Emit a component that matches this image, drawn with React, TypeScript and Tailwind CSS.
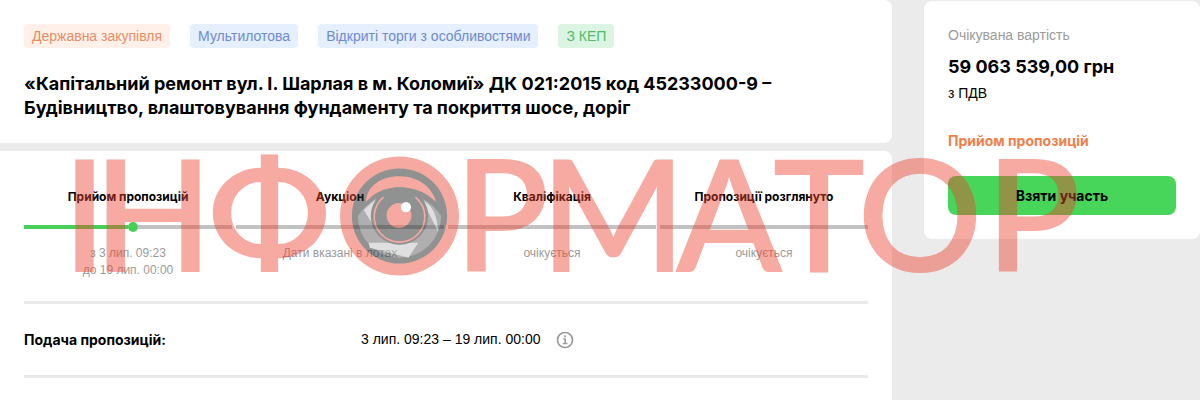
import type { ReactNode } from "react";

type Step = {
  title: string;
  notes: string[];
  active?: boolean;
};

const tags = [
  { label: "Державна закупівля", className: "bg-[#fff0e9] text-[#e58e66]" },
  { label: "Мультилотова", className: "bg-[#e5effd] text-[#6f8ad0]" },
  { label: "Відкриті торги з особливостями", className: "bg-[#e5effd] text-[#6f8ad0]" },
  { label: "З КЕП", className: "bg-[#dbf4e3] text-[#4fbd68]" },
];

const steps: Step[] = [
  { title: "Прийом пропозицій", notes: ["з 3 лип. 09:23", "до 19 лип. 00:00"], active: true },
  { title: "Аукціон", notes: ["Дати вказані в лотах"] },
  { title: "Кваліфікація", notes: ["очікується"] },
  { title: "Пропозиції розглянуто", notes: ["очікується"] },
];

function InfoIcon() {
  return (
    <svg viewBox="0 0 18 18" className="size-[18px]" fill="none" stroke="#9b9b9b" aria-hidden="true">
      <circle cx="9" cy="9" r="7.5" strokeWidth="1.7" />
      <path d="M7.2 8h2v4.3M6.8 12.5h4.6" strokeWidth="1.5" />
      <circle cx="9" cy="5.3" r="1.1" fill="#9b9b9b" stroke="none" />
    </svg>
  );
}

function StepColumn({ step }: { step: Step }) {
  return (
    <li className="flex flex-1 flex-col items-center">
      <h3 className="font-['Inter',sans-serif] text-[12px] leading-4 font-bold whitespace-nowrap">{step.title}</h3>
      <div className="mt-3 mb-2 flex h-5 w-full items-center">
        {step.active ? (
          <>
            <div className="h-1 w-1/2 bg-[#47cf57]" />
            <div className="size-[10px] rounded-full bg-[#47cf57]" />
          </>
        ) : null}
        <div className="h-1 flex-1 bg-[#c2c2c2]" />
      </div>
      {step.notes.map((note) => (
        <p key={note} className="text-[12px] leading-[17px] text-[#9b9b9b]">
          {note}
        </p>
      ))}
    </li>
  );
}

function Eye() {
  return (
    <svg viewBox="0 0 120 120" className="mt-2 size-[120px] opacity-50" aria-hidden="true">
      <circle cx="60" cy="60" r="60" fill="#ef5543" />
      <circle cx="60" cy="60" r="48" fill="#232826" />
      {/* brow */}
      <path d="M26 46C27 30 41 20 60 20S93 31 97 46C87 36 74 31 60 31S35 36 26 46Z" fill="#ef5543" />
      {/* eyeball */}
      <path d="M18 60C23 53 28 47 36 43L84 43C92 47 97 53 102 60A42 42 0 0 1 18 60Z" fill="#616161" />
      <path d="M24 54L36 43C32 51 31 60 34 70ZM30 92L29 87H79L69 102ZM83 44C92 48 98 57 99 76Z" fill="#c1c1c1" />
      <path d="M36 43Q60 34 84 43L78 58H42Z" fill="#232826" />
      <circle cx="60" cy="60" r="29" fill="#232826" />
      <path d="M44 41A25.5 25.5 0 1 0 76 41" fill="none" stroke="#ef5543" strokeWidth="1.6" />
      <circle cx="59.5" cy="59.5" r="12.5" fill="#ef5543" />
      <circle cx="66.5" cy="51" r="5.2" fill="#fff" />
    </svg>
  );
}

function Cell({ className, children }: { className: string; children: ReactNode }) {
  return <span className={`flex shrink-0 justify-center ${className}`}>{children}</span>;
}

function Watermark() {
  return (
    <div className="pointer-events-none absolute top-[132px] left-[62px] flex h-40 items-center font-['Lato',sans-serif] text-[156px] leading-40 font-semibold text-[#eb422e]/45">
      <Cell className="w-[45px]">І</Cell>
      <Cell className="w-[92px]">Н</Cell>
      <Cell className="w-[141px]">Ф</Cell>
      <Cell className="w-[119px]">
        <Eye />
      </Cell>
      <Cell className="mr-2 w-[85px]">Р</Cell>
      <Cell className="w-[122px]">М</Cell>
      <Cell className="w-[110px]">А</Cell>
      <Cell className="w-[70px]">Т</Cell>
      <Cell className="w-[132px]">О</Cell>
      <Cell className="w-[94px]">Р</Cell>
    </div>
  );
}

export default function App() {
  return (
    <div className="relative min-h-screen overflow-hidden bg-[#ebebeb] font-['Liberation_Sans',sans-serif] text-black">
      <div className="flex items-start gap-8">
        <main className="flex min-h-screen flex-1 flex-col gap-2">
          <section className="rounded-r-lg bg-white px-6 pt-6 pb-[23px]">
            <ul className="flex gap-5">
              {tags.map((tag) => (
                <li key={tag.label} className={`rounded px-2 text-[14px] leading-6 ${tag.className}`}>
                  {tag.label}
                </li>
              ))}
            </ul>
            <h1 className="mt-6 font-['Inter',sans-serif] text-[18px] leading-6 font-bold">
              «Капітальний ремонт вул. І. Шарлая в м. Коломиї» ДК 021:2015 код 45233000-9 –
              <br />
              Будівництво, влаштовування фундаменту та покриття шосе, доріг
            </h1>
          </section>

          <section className="flex-1 rounded-tr-lg bg-white px-6 pt-[38px]">
            <ol className="flex gap-1">
              {steps.map((step) => (
                <StepColumn key={step.title} step={step} />
              ))}
            </ol>
            <dl className="mt-[22px] flex items-center border-y-3 border-[#e9e9e9] py-6 text-[14px] leading-[23px]">
              <dt className="w-[337px] font-['Inter',sans-serif] font-bold">Подача пропозицій:</dt>
              <dd className="flex items-center gap-4">
                3 лип. 09:23 – 19 лип. 00:00
                <button type="button" aria-label="Інформація">
                  <InfoIcon />
                </button>
              </dd>
            </dl>
          </section>
        </main>

        <aside className="mt-px w-[276px] shrink-0 rounded-lg bg-white p-6">
          <p className="text-[14px] leading-5 text-[#9b9b9b]">Очікувана вартість</p>
          <p className="mt-2 font-['Inter',sans-serif] text-[18px] leading-7 font-bold">59 063 539,00 грн</p>
          <p className="text-[14px] leading-6">з ПДВ</p>
          <p className="mt-6 font-['Inter',sans-serif] text-[14px] leading-6 font-bold text-[#ef7f4b]">
            Прийом пропозицій
          </p>
          <button
            type="button"
            className="mt-[23px] h-[39px] w-full rounded-lg bg-[#47d659] font-['Inter',sans-serif] text-[14px] font-bold"
          >
            Взяти участь
          </button>
        </aside>
      </div>
      <Watermark />
    </div>
  );
}
